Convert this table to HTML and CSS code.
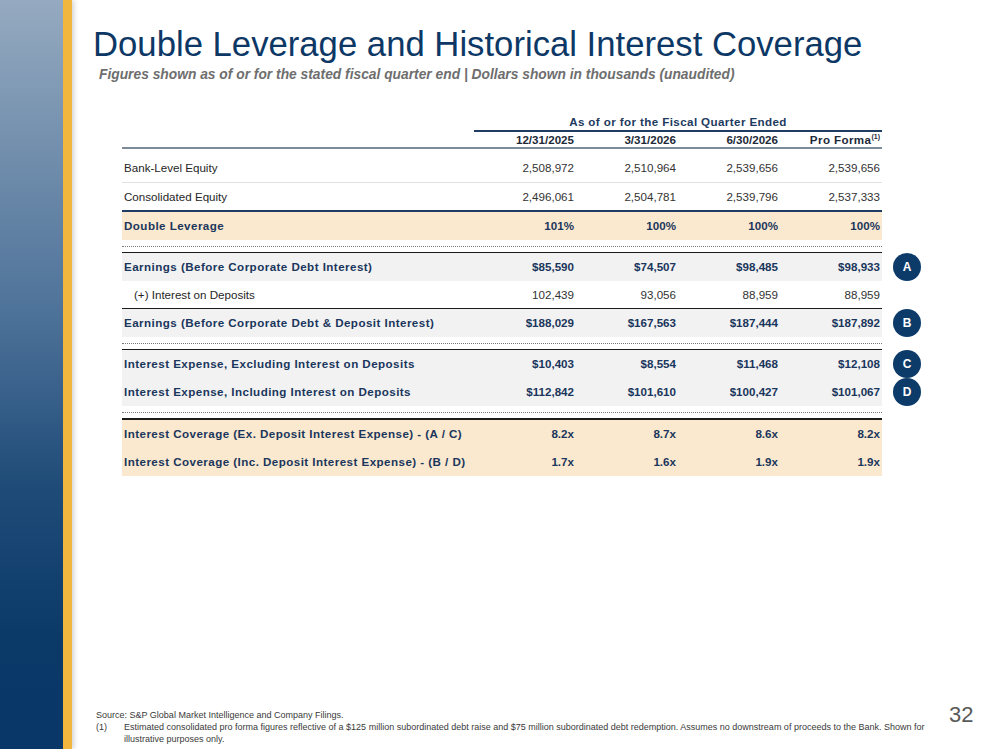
FILE: index.html
```html
<!DOCTYPE html>
<html>
<head>
  <meta charset="UTF-8">
  <title>Double Leverage and Historical Interest Coverage</title>
  <link rel="stylesheet" href="styles.css">
</head>
<body>
  <div class="slide">
    <div class="rail"></div>

    <div class="content">
      <h1 class="title">Double Leverage and Historical Interest Coverage</h1>
      <p class="subtitle">Figures shown as of or for the stated fiscal quarter end | Dollars shown in thousands (unaudited)</p>

      <div class="table">
        <div class="group-head">
          <div class="group-label">As of or for the Fiscal Quarter Ended</div>
        </div>
        <div class="row col-head">
          <div></div>
          <div>12/31/2025</div>
          <div>3/31/2026</div>
          <div>6/30/2026</div>
          <div class="pro">Pro Forma<sup>(1)</sup></div>
        </div>

        <div class="row first light-line">
          <div class="label">Bank-Level Equity</div>
          <div>2,508,972</div>
          <div>2,510,964</div>
          <div>2,539,656</div>
          <div>2,539,656</div>
        </div>
        <div class="row navy-line">
          <div class="label">Consolidated Equity</div>
          <div>2,496,061</div>
          <div>2,504,781</div>
          <div>2,539,796</div>
          <div>2,537,333</div>
        </div>
        <div class="row bold beige">
          <div class="label">Double Leverage</div>
          <div>101%</div>
          <div>100%</div>
          <div>100%</div>
          <div>100%</div>
        </div>

        <div class="sep"></div>

        <div class="row bold grey">
          <div class="label">Earnings (Before Corporate Debt Interest)</div>
          <div>$85,590</div>
          <div>$74,507</div>
          <div>$98,485</div>
          <div>$98,933</div>
          <span class="badge">A</span>
        </div>
        <div class="row dark-line">
          <div class="label indent">(+) Interest on Deposits</div>
          <div>102,439</div>
          <div>93,056</div>
          <div>88,959</div>
          <div>88,959</div>
        </div>
        <div class="row bold grey">
          <div class="label">Earnings (Before Corporate Debt &amp; Deposit Interest)</div>
          <div>$188,029</div>
          <div>$167,563</div>
          <div>$187,444</div>
          <div>$187,892</div>
          <span class="badge">B</span>
        </div>

        <div class="sep"></div>

        <div class="row bold grey">
          <div class="label">Interest Expense, Excluding Interest on Deposits</div>
          <div>$10,403</div>
          <div>$8,554</div>
          <div>$11,468</div>
          <div>$12,108</div>
          <span class="badge">C</span>
        </div>
        <div class="row bold grey">
          <div class="label">Interest Expense, Including Interest on Deposits</div>
          <div>$112,842</div>
          <div>$101,610</div>
          <div>$100,427</div>
          <div>$101,067</div>
          <span class="badge">D</span>
        </div>

        <div class="sep thick"></div>

        <div class="row bold beige">
          <div class="label">Interest Coverage (Ex. Deposit Interest Expense) - (A / C)</div>
          <div>8.2x</div>
          <div>8.7x</div>
          <div>8.6x</div>
          <div>8.2x</div>
        </div>
        <div class="row bold beige">
          <div class="label">Interest Coverage (Inc. Deposit Interest Expense) - (B / D)</div>
          <div>1.7x</div>
          <div>1.6x</div>
          <div>1.9x</div>
          <div>1.9x</div>
        </div>
      </div>

      <div class="footer">
        <div class="notes">
          <div>Source: S&amp;P Global Market Intelligence and Company Filings.</div>
          <div class="note">
            <span class="note-num">(1)</span>
            <span class="note-text">Estimated consolidated pro forma figures reflective of a $125 million subordinated debt raise and $75 million subordinated debt redemption. Assumes no downstream of proceeds to the Bank. Shown for illustrative purposes only.</span>
          </div>
        </div>
        <div class="page-num">32</div>
      </div>
    </div>
  </div>
</body>
</html>
```

FILE: styles.css
```css
body {
  margin: 0;
  background: #fff;
  font-family: "Liberation Sans", Arial, sans-serif;
}

.slide {
  display: flex;
  width: 999px;
  height: 749px;
  overflow: hidden;
}

.rail {
  flex: 0 0 63px;
  background: linear-gradient(to bottom, #95aac0 0%, #6f8cab 22%, #4d7299 42%, #1f4b78 65%, #0b3a69 85%, #083768 100%);
  border-right: 9px solid #f1b63e;
  box-shadow: 2px 0 5px rgba(0, 0, 0, 0.18);
}

.content {
  flex: 1;
  display: flex;
  flex-direction: column;
  padding: 27px 0 4px 21px;
}

.title {
  margin: 0;
  font-size: 34.7px;
  line-height: 34px;
  font-weight: normal;
  color: #0d3866;
}

.subtitle {
  margin: 6px 0 0 6px;
  font-size: 13.8px;
  line-height: 16px;
  font-weight: bold;
  font-style: italic;
  color: #6e6e6e;
}

.table {
  width: 760px;
  margin: 31px 0 0 29px;
  font-size: 11.6px;
  color: #333;
}

.group-head {
  display: grid;
  grid-template-columns: 352px 408px;
}

.group-label {
  grid-column: 2;
  text-align: center;
  height: 16px;
  line-height: 16px;
  font-weight: bold;
  letter-spacing: 0.4px;
  color: #1d3a5e;
  border-bottom: 2px solid #1f3d62;
}

.row {
  position: relative;
  display: grid;
  grid-template-columns: 352px repeat(4, 102px);
  height: 28px;
  line-height: 28px;
}

.row > div {
  text-align: right;
  padding-right: 2px;
  white-space: nowrap;
}

.row > .label {
  text-align: left;
  padding-left: 2px;
  color: #262626;
}

.label.indent {
  padding-left: 12px;
}

.col-head {
  height: 15px;
  line-height: 15px;
  font-weight: bold;
  color: #1e2a38;
  border-bottom: 2px solid #7d8b99;
}

.col-head .pro {
  letter-spacing: 0.4px;
}

.col-head sup {
  font-size: 7px;
  line-height: 0;
  letter-spacing: 0;
  vertical-align: 5px;
}

.row.first {
  margin-top: 5px;
}

.light-line {
  border-bottom: 1px solid #e2e2e2;
}

.navy-line {
  height: 27px;
  border-bottom: 2px solid #1f3d62;
}

.dark-line {
  height: 27px;
  border-bottom: 1px solid #1a1a1a;
}

.bold {
  font-weight: bold;
  color: #1a365c;
}

.bold > .label {
  color: #1a365c;
  letter-spacing: 0.45px;
}

.beige {
  background: #fbe9cf;
}

.grey {
  background: #f2f2f2;
}

.sep {
  height: 5px;
  margin-top: 6px;
  border-top: 1px dotted #7a7a7a;
  border-bottom: 1px solid #1a1a1a;
}

.sep.thick {
  border-bottom-width: 2px;
}

.badge {
  position: absolute;
  top: 0;
  right: -39px;
  width: 28px;
  height: 28px;
  border-radius: 50%;
  background: #0d3b69;
  color: #fff;
  font-size: 12px;
  font-weight: bold;
  line-height: 28px;
  text-align: center;
}

.footer {
  margin-top: auto;
  display: flex;
  align-items: flex-start;
  margin-left: 3px;
}

.notes {
  width: 845px;
  padding-top: 6px;
  font-size: 9px;
  line-height: 12px;
  color: #3a3a3a;
}

.note {
  display: flex;
}

.note-num {
  flex: 0 0 28px;
}

.note-text {
  width: 810px;
}

.page-num {
  margin: 1px 0 0 8px;
  font-size: 22px;
  line-height: 22px;
  color: #595959;
}
```
